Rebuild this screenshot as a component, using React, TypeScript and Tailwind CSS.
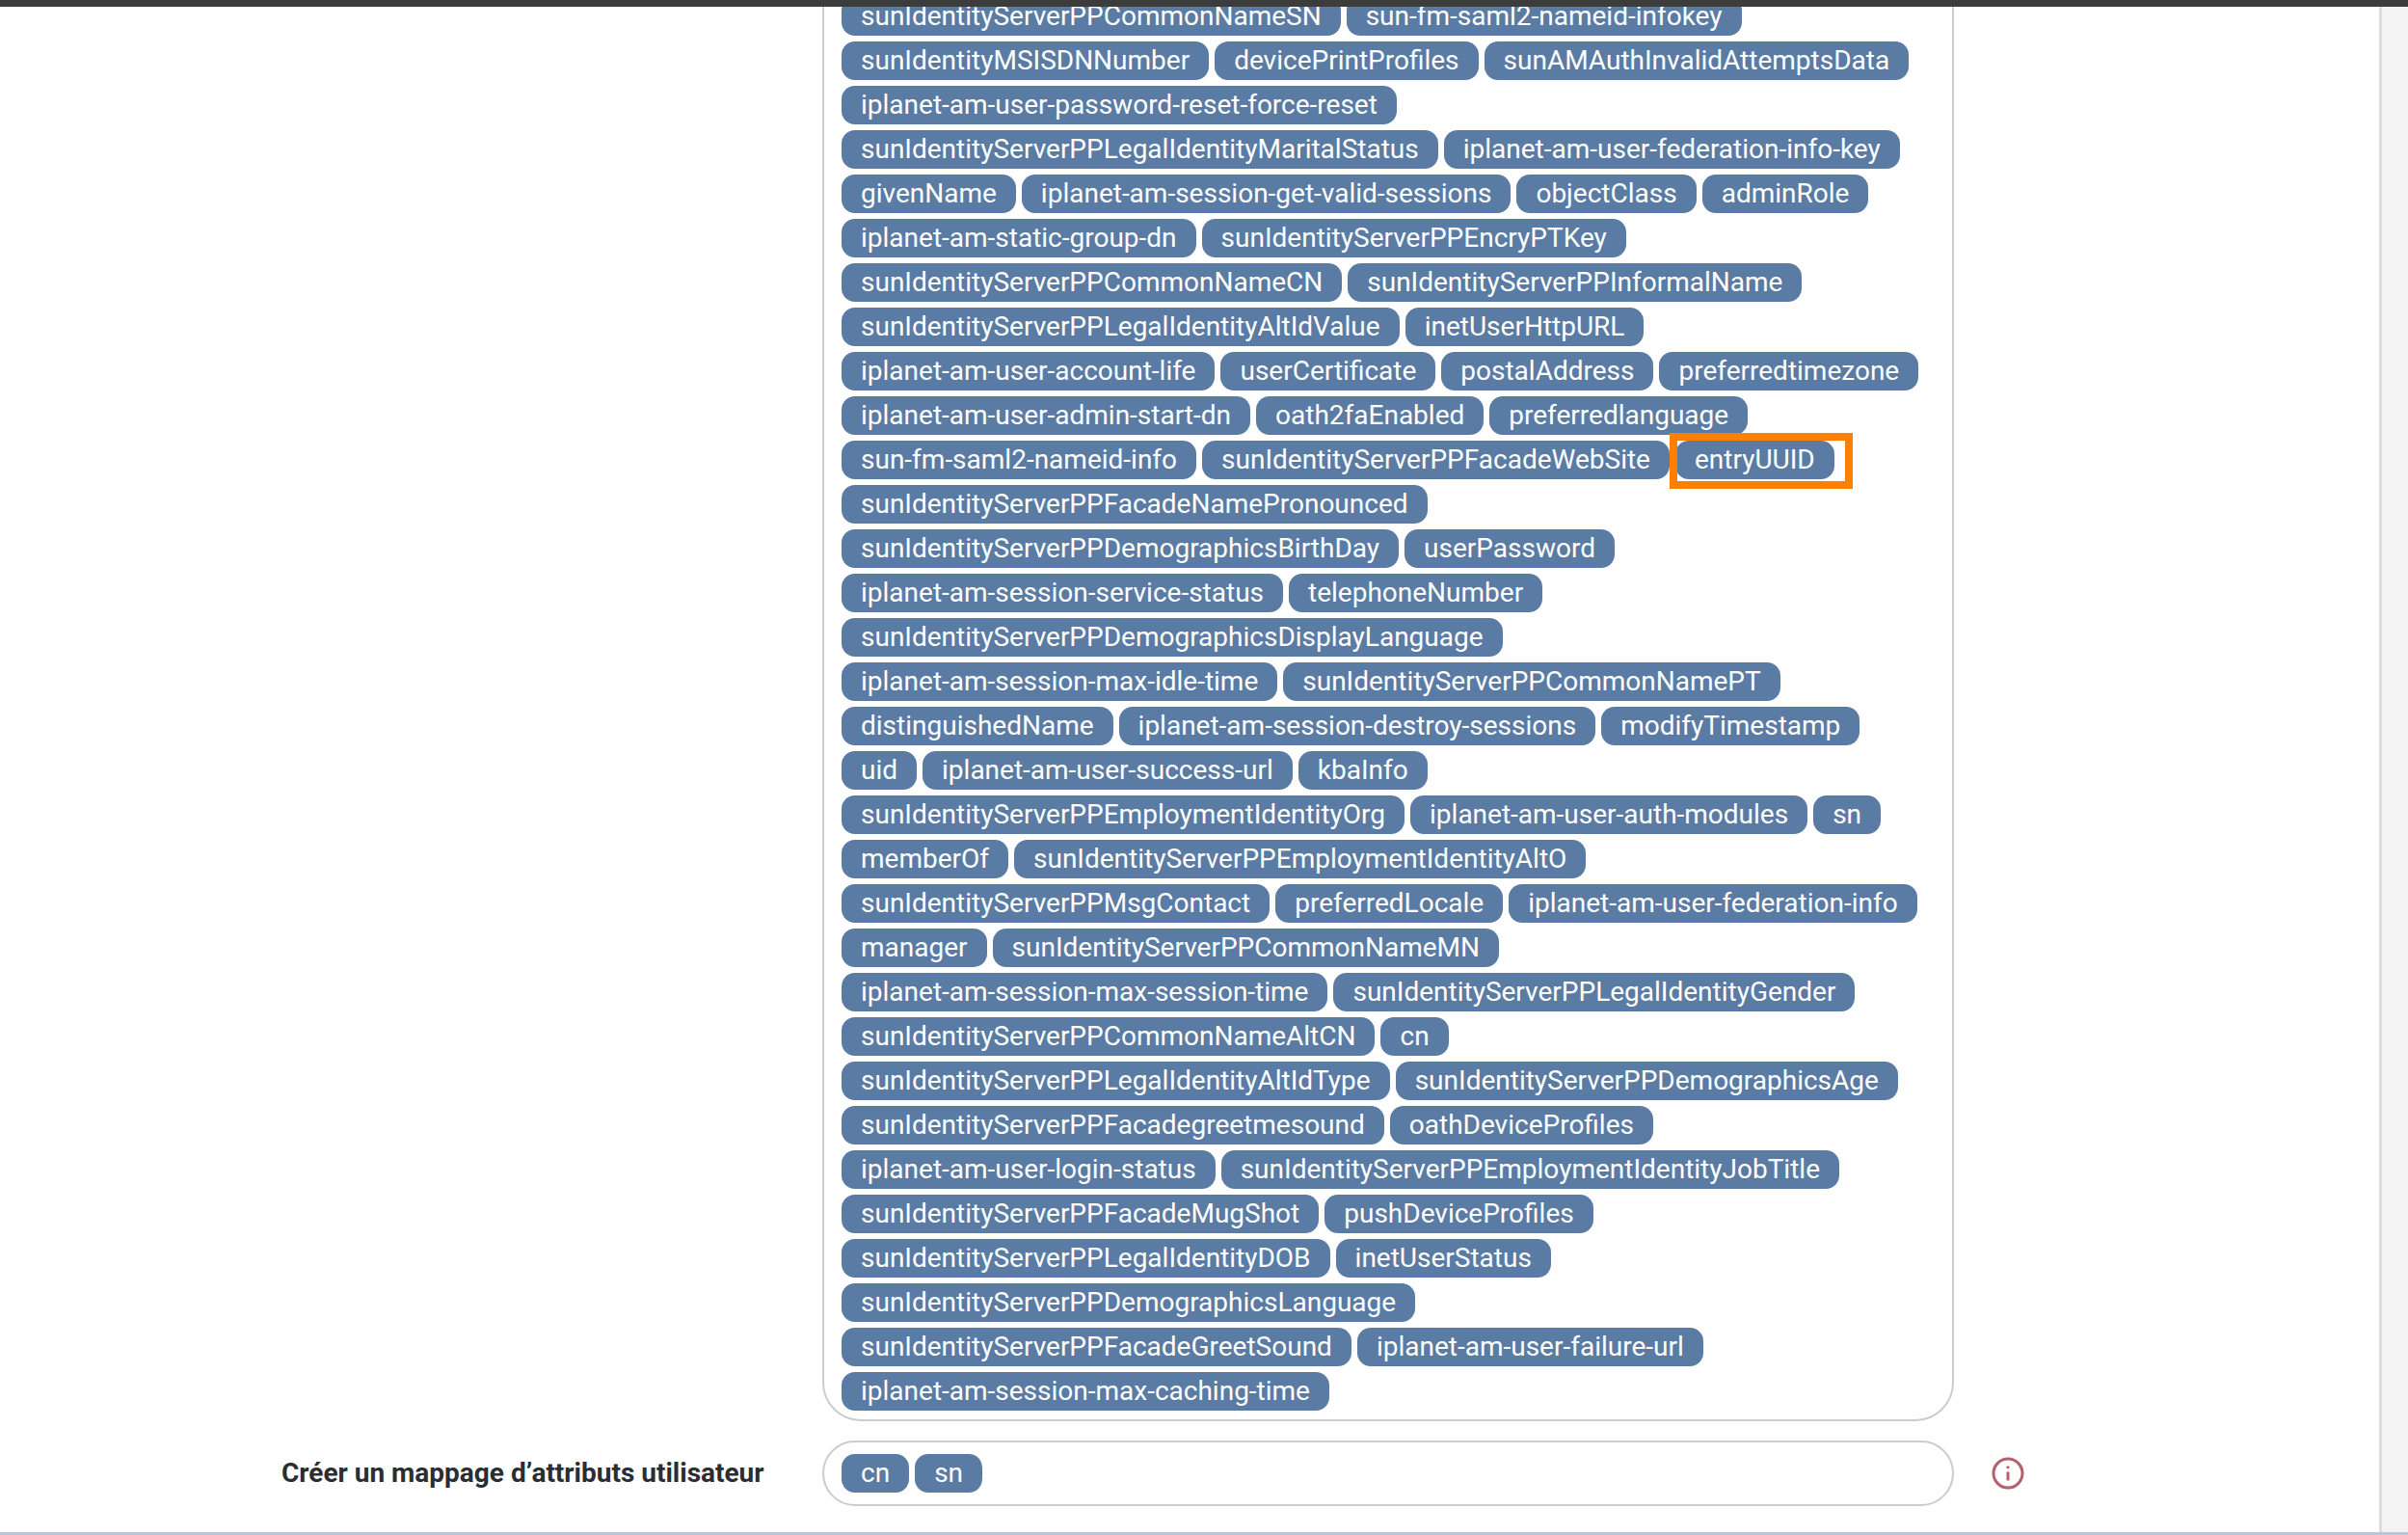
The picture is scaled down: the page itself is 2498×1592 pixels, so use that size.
const ROWS: string[][] = [
  ["sunIdentityServerPPCommonNameSN", "sun-fm-saml2-nameid-infokey"],
  ["sunIdentityMSISDNNumber", "devicePrintProfiles", "sunAMAuthInvalidAttemptsData"],
  ["iplanet-am-user-password-reset-force-reset"],
  ["sunIdentityServerPPLegalIdentityMaritalStatus", "iplanet-am-user-federation-info-key"],
  ["givenName", "iplanet-am-session-get-valid-sessions", "objectClass", "adminRole"],
  ["iplanet-am-static-group-dn", "sunIdentityServerPPEncryPTKey"],
  ["sunIdentityServerPPCommonNameCN", "sunIdentityServerPPInformalName"],
  ["sunIdentityServerPPLegalIdentityAltIdValue", "inetUserHttpURL"],
  ["iplanet-am-user-account-life", "userCertificate", "postalAddress", "preferredtimezone"],
  ["iplanet-am-user-admin-start-dn", "oath2faEnabled", "preferredlanguage"],
  ["sun-fm-saml2-nameid-info", "sunIdentityServerPPFacadeWebSite", "entryUUID"],
  ["sunIdentityServerPPFacadeNamePronounced"],
  ["sunIdentityServerPPDemographicsBirthDay", "userPassword"],
  ["iplanet-am-session-service-status", "telephoneNumber"],
  ["sunIdentityServerPPDemographicsDisplayLanguage"],
  ["iplanet-am-session-max-idle-time", "sunIdentityServerPPCommonNamePT"],
  ["distinguishedName", "iplanet-am-session-destroy-sessions", "modifyTimestamp"],
  ["uid", "iplanet-am-user-success-url", "kbaInfo"],
  ["sunIdentityServerPPEmploymentIdentityOrg", "iplanet-am-user-auth-modules", "sn"],
  ["memberOf", "sunIdentityServerPPEmploymentIdentityAltO"],
  ["sunIdentityServerPPMsgContact", "preferredLocale", "iplanet-am-user-federation-info"],
  ["manager", "sunIdentityServerPPCommonNameMN"],
  ["iplanet-am-session-max-session-time", "sunIdentityServerPPLegalIdentityGender"],
  ["sunIdentityServerPPCommonNameAltCN", "cn"],
  ["sunIdentityServerPPLegalIdentityAltIdType", "sunIdentityServerPPDemographicsAge"],
  ["sunIdentityServerPPFacadegreetmesound", "oathDeviceProfiles"],
  ["iplanet-am-user-login-status", "sunIdentityServerPPEmploymentIdentityJobTitle"],
  ["sunIdentityServerPPFacadeMugShot", "pushDeviceProfiles"],
  ["sunIdentityServerPPLegalIdentityDOB", "inetUserStatus"],
  ["sunIdentityServerPPDemographicsLanguage"],
  ["sunIdentityServerPPFacadeGreetSound", "iplanet-am-user-failure-url"],
  ["iplanet-am-session-max-caching-time"],
];

function Chip({ label, marked }: { label: string; marked?: boolean }) {
  return (
    <span className="relative h-[40px] px-[20px] flex items-center rounded-[14px] bg-[#5a7ba3] text-white text-[28px] whitespace-nowrap">
      {label}
      {marked && <span className="absolute left-[-6px] top-[-8px] w-[190px] h-[58px] border-[8px] border-[#ff8000]" />}
    </span>
  );
}

export default function App() {
  return (
    <div className="h-[1592px] w-[2498px] overflow-hidden flex flex-col bg-[#f3f3f3] font-['Roboto',sans-serif]">
      <div className="h-[7px] shrink-0 bg-[#3c3c3c] relative z-10" />
      <div className="flex-1 min-h-0 flex">
        <div className="w-[2468px] shrink-0 bg-white">
          <div className="-mt-[42px] ml-[853px] w-[1174px] rounded-b-[40px] border-2 border-[#cccccc] pt-[30px] pb-[9px] pl-[18px] flex flex-col gap-[6px]">
            {ROWS.map((row, i) => (
              <div key={i} className="flex gap-[6px]">
                {row.map(label => (
                  <Chip key={label} label={label} marked={label === "entryUUID"} />
                ))}
              </div>
            ))}
          </div>
          <div className="mt-[20px] flex items-center">
            <label className="w-[853px] shrink-0 pl-[292px] font-bold text-[28px] text-[#2a2e33] whitespace-nowrap">
              Créer un mappage d’attributs utilisateur
            </label>
            <div className="w-[1174px] h-[68px] rounded-[34px] border-2 border-[#cccccc] pl-[18px] flex items-center gap-[6px]">
              <Chip label="cn" />
              <Chip label="sn" />
            </div>
            <svg className="ml-[38px] w-[36px] h-[36px] text-[#b5606f]" viewBox="0 0 24 24" fill="none" stroke="currentColor" strokeWidth="2">
              <circle cx="12" cy="12" r="10" />
              <path d="M12 11v6M12 7v1.6" />
            </svg>
          </div>
        </div>
        <div className="flex-1 border-l-[3px] border-[#dddddd]" />
      </div>
      <div className="h-[3px] shrink-0 bg-[#b9c5d8]" />
    </div>
  );
}
